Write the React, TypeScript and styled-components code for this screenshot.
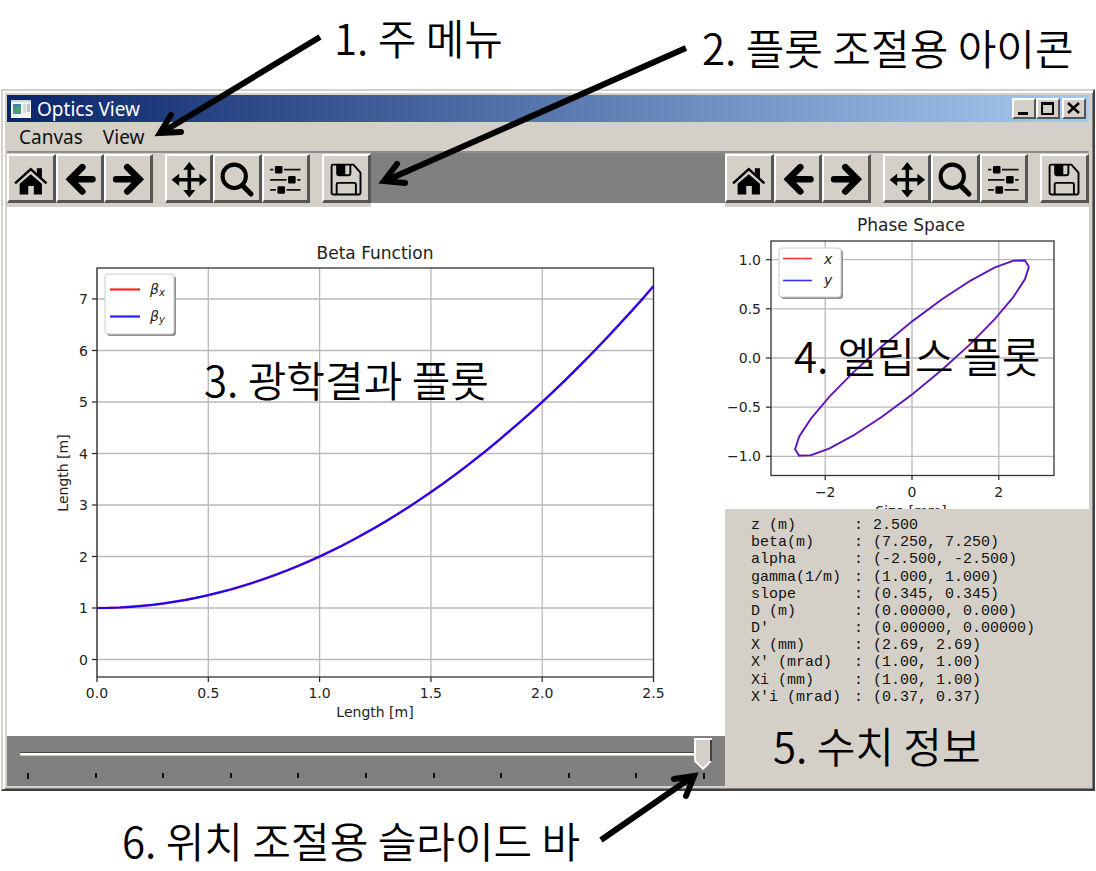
import React from "react";
import styled, { createGlobalStyle } from "styled-components";

const face = "#d4d0c8";
const gray = "#808080";
const dark = "#404040";

const GlobalStyle = createGlobalStyle`
  *, *::before, *::after { box-sizing: border-box; }
  body { margin: 0; background: #fff; color: #000; }
`;

const Page = styled.main`
  position: relative;
  padding: 89px 1px 80px;
`;

const AppWindow = styled.section`
  border: 2px solid;
  border-color: ${face} ${dark} ${dark} ${face};
  box-shadow: inset 2px 2px #fff, inset -1px -1px ${gray};
  background: ${face};
  padding: 4px 4px 3px;
`;

const TitleBar = styled.header`
  display: flex;
  align-items: center;
  height: 27px;
  padding: 0 3px 0 4px;
  background: linear-gradient(90deg, #0a246a, #a6caf0);
`;

const Title = styled.h1`
  flex: 1;
  margin: 0 0 0 6px;
  font: 400 19px/26px "Noto Sans", "Open Sans", sans-serif;
  color: #fff;
`;

const raised = `
  border: 2px solid;
  border-color: #fff #555 #555 #fff;
  border-radius: 0;
  background: ${face};
  padding: 0;
  color: #000;
`;

const CaptionButton = styled.button<{ $apart?: boolean }>`
  ${raised}
  width: 24px;
  height: 21px;
  margin-left: ${(p) => (p.$apart ? 2 : 0)}px;
  svg { display: block; }
`;

const MenuBar = styled.nav`
  display: flex;
  gap: 20px;
  height: 31px;
  padding: 0 12px;
  border-bottom: 2px solid #8e8d89;
`;

const MenuItem = styled.button`
  border: 0;
  padding: 0;
  background: none;
  font: 400 19px/28px "Noto Sans", "Open Sans", sans-serif;
  color: #111;
`;

const Content = styled.div`
  display: grid;
  grid-template-columns: minmax(0, 718fr) minmax(0, 364fr);
`;

const Pane = styled.div`
  display: flex;
  flex-direction: column;
  background: #fff;
`;

const ToolRow = styled.div`
  display: flex;
  align-items: flex-start;
`;

const RowFiller = styled.div`
  flex: 1;
  height: 50px;
  background: ${gray};
`;

const ToolBar = styled.div`
  display: grid;
  grid-template-columns: repeat(3, 1fr) 12px repeat(3, 1fr) 12px 1fr;
  flex: 0 1 364px;
  height: 54px;
  padding: 1px 0 5px;
  background: ${face};
`;

const ToolButton = styled.button<{ $column: number }>`
  ${raised}
  grid-column: ${(p) => p.$column};
  grid-row: 1;
  min-width: 0;
  border-width: 2px 3px 3px 2px;
  svg { display: block; width: 100%; height: 100%; }
`;

const Chart = styled.svg`
  display: block;
  width: 100%;
  height: auto;
  font-family: "DejaVu Sans", sans-serif;
  font-size: 14px;
  fill: #222;
`;

const SliderPanel = styled.div`
  height: 50px;
  padding: 2px 13px 0;
  background: ${gray};
`;

const Slider = styled.input`
  appearance: none;
  display: block;
  width: 100%;
  height: 32px;
  margin: 0;
  background: linear-gradient(#4a4743 0 1px, #fff 1px 3px, #c9c6bf 3px 4px) 0 14px / 100% 4px no-repeat;

  &::-webkit-slider-runnable-track { height: 32px; }
  &::-webkit-slider-thumb {
    appearance: none;
    width: 18px;
    height: 32px;
    border: 0;
    background:
      linear-gradient(to top right, #fff 66%, transparent 66%) 0 100% / 9px 9px no-repeat,
      linear-gradient(to top left, #fff 66%, transparent 66%) 100% 100% / 9px 9px no-repeat,
      linear-gradient(#fff, #fff) 0 0 / 100% 2px no-repeat,
      linear-gradient(#fff, #fff) 0 0 / 2px 100% no-repeat,
      linear-gradient(${dark}, ${dark}) 100% 0 / 2px 100% no-repeat,
      ${face};
    clip-path: polygon(0 0, 100% 0, 100% 23px, 50% 100%, 0 23px);
  }
`;

const Ticks = styled.div`
  display: flex;
  justify-content: space-between;
  margin: 3px 7px 0;
`;

const Tick = styled.i`
  width: 2px;
  height: 5px;
  background: #111;
  &:first-child, &:last-child { height: 6px; }
`;

const InfoPanel = styled.div`
  flex: 1;
  padding: 8px 26px;
  background: ${face};
`;

const InfoTable = styled.table`
  height: 189px;
  border-collapse: collapse;
  font: 400 15px/17px "Liberation Mono", monospace;
  color: #111;
  th, td { padding: 0; font-weight: 400; text-align: left; white-space: nowrap; }
  th { width: 103px; }
  th + td { width: 19px; }
`;

const Arrows = styled.svg`
  position: absolute;
  left: 0;
  top: 0;
  pointer-events: none;
  fill: none;
  stroke: #000;
  stroke-width: 6;
`;

const Note = styled.p<{ $x: number; $y: number }>`
  position: absolute;
  left: ${(p) => p.$x}px;
  top: ${(p) => p.$y}px;
  margin: 0;
  font: 350 42px/48px "Noto Sans CJK KR", sans-serif;
  white-space: nowrap;
  pointer-events: none;
`;

const icons: Record<string, React.ReactNode> = {
  Home: (
    <>
      <path d="M8 29 23.500 15 39 29" fill="none" stroke="#000" strokeWidth="2.500" />
      <path d="M29.500 14h5v10l-5-4.500z" />
      <path d="M12.500 29.500 23.500 20l11 9.500V40h-8v-8.500h-5.500V40h-8.500z" />
    </>
  ),
  Back: <path d="M26 13 14 25l12 12M14 25h22" fill="none" stroke="#000" strokeWidth="6.500" strokeLinecap="round" />,
  Forward: <path d="M23 13 35 25 23 37M35 25H12" fill="none" stroke="#000" strokeWidth="6.500" strokeLinecap="round" />,
  Pan: (
    <>
      <path d="M24 12v27M10 25.500h28" stroke="#000" strokeWidth="3.500" />
      <path d="M24 8l6 7.500h-12zM24 43l6-7.500h-12zM6.500 25.500l7.500-6v12zM41.500 25.500l-7.500-6v12z" />
    </>
  ),
  Zoom: (
    <g fill="none" stroke="#000">
      <circle cx="21" cy="22" r="11.500" strokeWidth="4" />
      <path d="M29 31l8.500 8.500" strokeWidth="5" strokeLinecap="round" />
    </g>
  ),
  Subplots: (
    <>
      <path d="M8 15.500h30M8 25.500h30M8 35.500h30" stroke="#111" strokeWidth="1.800" />
      <g stroke={face} strokeWidth="1.500">
        <rect x="12" y="11" width="9" height="9" rx="2" />
        <rect x="25" y="21" width="9" height="9" rx="2" />
        <rect x="14.500" y="31" width="9" height="9" rx="2" />
      </g>
    </>
  ),
  Save: (
    <>
      <g fill="none" stroke="#000" strokeWidth="1.900" strokeLinejoin="round">
        <path d="M11 10.500h20l7 8V38.500q0 1.500-1.500 1.500H11q-1.500 0-1.500-1.500V12q0-1.500 1.500-1.500z" />
        <path d="M15 11v8.500q0 1.500 1.500 1.500H26.500q1.500 0 1.500-1.500V11M14.500 40V30q0-1.500 1.500-1.500H32q1.500 0 1.500 1.500V40" />
      </g>
      <path d="M15 10.500h8V21h-7l-1-1z" />
    </>
  ),
};

const toolColumns: [string, number][] = [
  ["Home", 1], ["Back", 2], ["Forward", 3], ["Pan", 5], ["Zoom", 6], ["Subplots", 7], ["Save", 9],
];

function PlotTools({ label }: { label: string }) {
  return (
    <ToolBar role="toolbar" aria-label={label}>
      {toolColumns.map(([name, column]) => (
        <ToolButton key={name} $column={column} type="button" aria-label={name}>
          <svg viewBox="2 2 43 43" aria-hidden="true">{icons[name]}</svg>
        </ToolButton>
      ))}
    </ToolBar>
  );
}

const bx = (z: number) => 90 + z * 222.6;
const by = (b: number) => 452.5 - b * 51.5;
const betaCurve = Array.from({ length: 51 }, (_, i) => i / 20)
  .map((z) => `${bx(z).toFixed(1)},${by(1 + z * z).toFixed(1)}`)
  .join(" ");

function BetaChart() {
  return (
    <Chart viewBox="0 0 718 529" role="img" aria-label="Beta Function">
      <text x="368" y="52" textAnchor="middle" fontSize="17">Beta Function</text>
      {[0, 0.5, 1, 1.5, 2, 2.5].map((z) => (
        <g key={z}>
          <path d={`M${bx(z)} 61V470`} stroke="#b8b8b8" strokeWidth="1.300" />
          <path d={`M${bx(z)} 470v5`} stroke="#222" strokeWidth="1.200" />
          <text x={bx(z)} y="491" textAnchor="middle">{z.toFixed(1)}</text>
        </g>
      ))}
      {[0, 1, 2, 3, 4, 5, 6, 7].map((b) => (
        <g key={b}>
          <path d={`M90 ${by(b)}H646.500`} stroke="#b8b8b8" strokeWidth="1.300" />
          <path d={`M85 ${by(b)}h5`} stroke="#222" strokeWidth="1.200" />
          <text x="81" y={by(b) + 5} textAnchor="end">{b}</text>
        </g>
      ))}
      <polyline points={betaCurve} fill="none" stroke="#f00" strokeWidth="2.500" strokeOpacity="0.500" />
      <polyline points={betaCurve} fill="none" stroke="#20f" strokeWidth="2.200" />
      <rect x="90" y="61" width="556.500" height="409" fill="none" stroke="#333" strokeWidth="1.300" />
      <text x="368" y="510" textAnchor="middle">Length [m]</text>
      <text transform="translate(61 266) rotate(-90)" textAnchor="middle">Length [m]</text>
      <rect x="100" y="69" width="69" height="60" rx="3" fill="#8f8f8f" />
      <rect x="98" y="67" width="69" height="60" rx="3" fill="#fff" stroke="#ccc" />
      <path d="M103 82.500h30" stroke="#f22" strokeWidth="2.200" />
      <path d="M103 109.500h30" stroke="#22f" strokeWidth="2.200" />
      <g fontStyle="italic">
        <text x="143" y="87">β<tspan fontSize="10" dy="2">x</tspan></text>
        <text x="143" y="114">β<tspan fontSize="10" dy="2">y</tspan></text>
      </g>
    </Chart>
  );
}

const px = (x: number) => 187 + x * 43.4;
const py = (y: number) => 151 - y * 98.3;
const amplitude = Math.sqrt(7.25);
const ellipse = Array.from({ length: 25 }, (_, i) => (i * Math.PI) / 12)
  .map((t) => {
    const x = amplitude * Math.cos(t);
    const y = (2.5 * Math.cos(t) - Math.sin(t)) / amplitude;
    return `${px(x).toFixed(1)},${py(y).toFixed(1)}`;
  })
  .join(" ");
const signed = (v: number, digits: number) => (v < 0 ? "−" : "") + Math.abs(v).toFixed(digits);

function PhaseChart() {
  return (
    <Chart viewBox="0 0 364 302" role="img" aria-label="Phase Space">
      <text x="186" y="24" textAnchor="middle" fontSize="17">Phase Space</text>
      {[-2, 0, 2].map((x) => (
        <g key={x}>
          <path d={`M${px(x)} 34V268`} stroke="#b8b8b8" strokeWidth="1.300" />
          <path d={`M${px(x)} 268v5`} stroke="#222" strokeWidth="1.200" />
          <text x={px(x)} y="290" textAnchor="middle">{signed(x, 0)}</text>
        </g>
      ))}
      {[-1, -0.5, 0, 0.5, 1].map((y) => (
        <g key={y}>
          <path d={`M46 ${py(y)}H329`} stroke="#b8b8b8" strokeWidth="1.300" />
          <path d={`M41 ${py(y)}h5`} stroke="#222" strokeWidth="1.200" />
          <text x="36" y={py(y) + 5} textAnchor="end">{signed(y, 1)}</text>
        </g>
      ))}
      <polyline points={ellipse} fill="none" stroke="#f00" strokeWidth="2" strokeOpacity="0.500" />
      <polyline points={ellipse} fill="none" stroke="#4218d8" strokeWidth="1.600" />
      <rect x="46" y="34" width="283" height="234.500" fill="none" stroke="#333" strokeWidth="1.300" />
      <text x="186" y="309" textAnchor="middle">Size [mm]</text>
      <rect x="56" y="43" width="62" height="49" rx="3" fill="#8f8f8f" />
      <rect x="54" y="41" width="62" height="49" rx="3" fill="#fff" stroke="#ccc" />
      <path d="M58 51.500h29" stroke="#f33" strokeWidth="1.600" />
      <path d="M58 73.500h29" stroke="#33f" strokeWidth="1.600" />
      <g fontStyle="italic">
        <text x="99" y="57">x</text>
        <text x="99" y="78">y</text>
      </g>
    </Chart>
  );
}

const readings: [string, string][] = [
  ["z (m)", "2.500"],
  ["beta(m)", "(7.250, 7.250)"],
  ["alpha", "(-2.500, -2.500)"],
  ["gamma(1/m)", "(1.000, 1.000)"],
  ["slope", "(0.345, 0.345)"],
  ["D (m)", "(0.00000, 0.000)"],
  ["D'", "(0.00000, 0.00000)"],
  ["X (mm)", "(2.69, 2.69)"],
  ["X' (mrad)", "(1.00, 1.00)"],
  ["Xi (mm)", "(1.00, 1.00)"],
  ["X'i (mrad)", "(0.37, 0.37)"],
];

const notes: [number, number, string][] = [
  [334, 13, "1. 주 메뉴"],
  [702, 23, "2. 플롯 조절용 아이콘"],
  [204, 355, "3. 광학결과 플롯"],
  [794, 331, "4. 엘립스 플롯"],
  [773, 721, "5. 수치 정보"],
  [122, 816, "6. 위치 조절용 슬라이드 바"],
];

export default function App() {
  return (
    <Page>
      <GlobalStyle />
      <AppWindow>
        <TitleBar>
          <svg width="20" height="18" aria-hidden="true">
            <path d="M0 0h20v18H0z" fill="#f4f4f0" />
            <path d="M0 0h20v2H0z" fill="#c9d4e4" />
            <path d="M2 4h8v10H2z" fill="#3f7fae" />
            <path d="M2 8l8-2v8H2z" fill="#4d9a78" />
            <path d="M12 4h3v9h-3z" fill="#d5dae2" />
            <path d="M16 4h3v8h-3z" fill="#b9c3d2" />
          </svg>
          <Title>Optics View</Title>
          <CaptionButton type="button" aria-label="Minimize">
            <svg width="20" height="17"><path d="M4 12h10v3H4z" /></svg>
          </CaptionButton>
          <CaptionButton type="button" aria-label="Maximize">
            <svg width="20" height="17"><path d="M3 2h13v13H3zM5 5v8h9V5z" fillRule="evenodd" /></svg>
          </CaptionButton>
          <CaptionButton type="button" aria-label="Close" $apart>
            <svg width="20" height="17"><path d="M4 3l11 10M15 3L4 13" stroke="#000" strokeWidth="2.400" /></svg>
          </CaptionButton>
        </TitleBar>
        <MenuBar>
          <MenuItem type="button">Canvas</MenuItem>
          <MenuItem type="button">View</MenuItem>
        </MenuBar>
        <Content>
          <Pane>
            <ToolRow>
              <PlotTools label="Beta plot tools" />
              <RowFiller />
            </ToolRow>
            <BetaChart />
            <SliderPanel>
              <Slider type="range" min={0} max={10} defaultValue={10} aria-label="Position" />
              <Ticks>
                {Array.from({ length: 11 }, (_, i) => <Tick key={i} />)}
              </Ticks>
            </SliderPanel>
          </Pane>
          <Pane>
            <ToolRow>
              <PlotTools label="Phase plot tools" />
            </ToolRow>
            <PhaseChart />
            <InfoPanel>
              <InfoTable>
                <tbody>
                  {readings.map(([name, value]) => (
                    <tr key={name}>
                      <th scope="row">{name}</th>
                      <td>:</td>
                      <td>{value}</td>
                    </tr>
                  ))}
                </tbody>
              </InfoTable>
            </InfoPanel>
          </Pane>
        </Content>
      </AppWindow>
      <Arrows width="1096" height="871" aria-hidden="true">
        <path d="M320 37 161 133M686 48 385 181M601 840 692 777" />
        <path d="M171 115 160 133 181 132M397 164 384 181 405 183M674 779 694 776 686 796" strokeLinecap="round" />
      </Arrows>
      {notes.map(([x, y, text]) => (
        <Note key={text} $x={x} $y={y}>{text}</Note>
      ))}
    </Page>
  );
}
